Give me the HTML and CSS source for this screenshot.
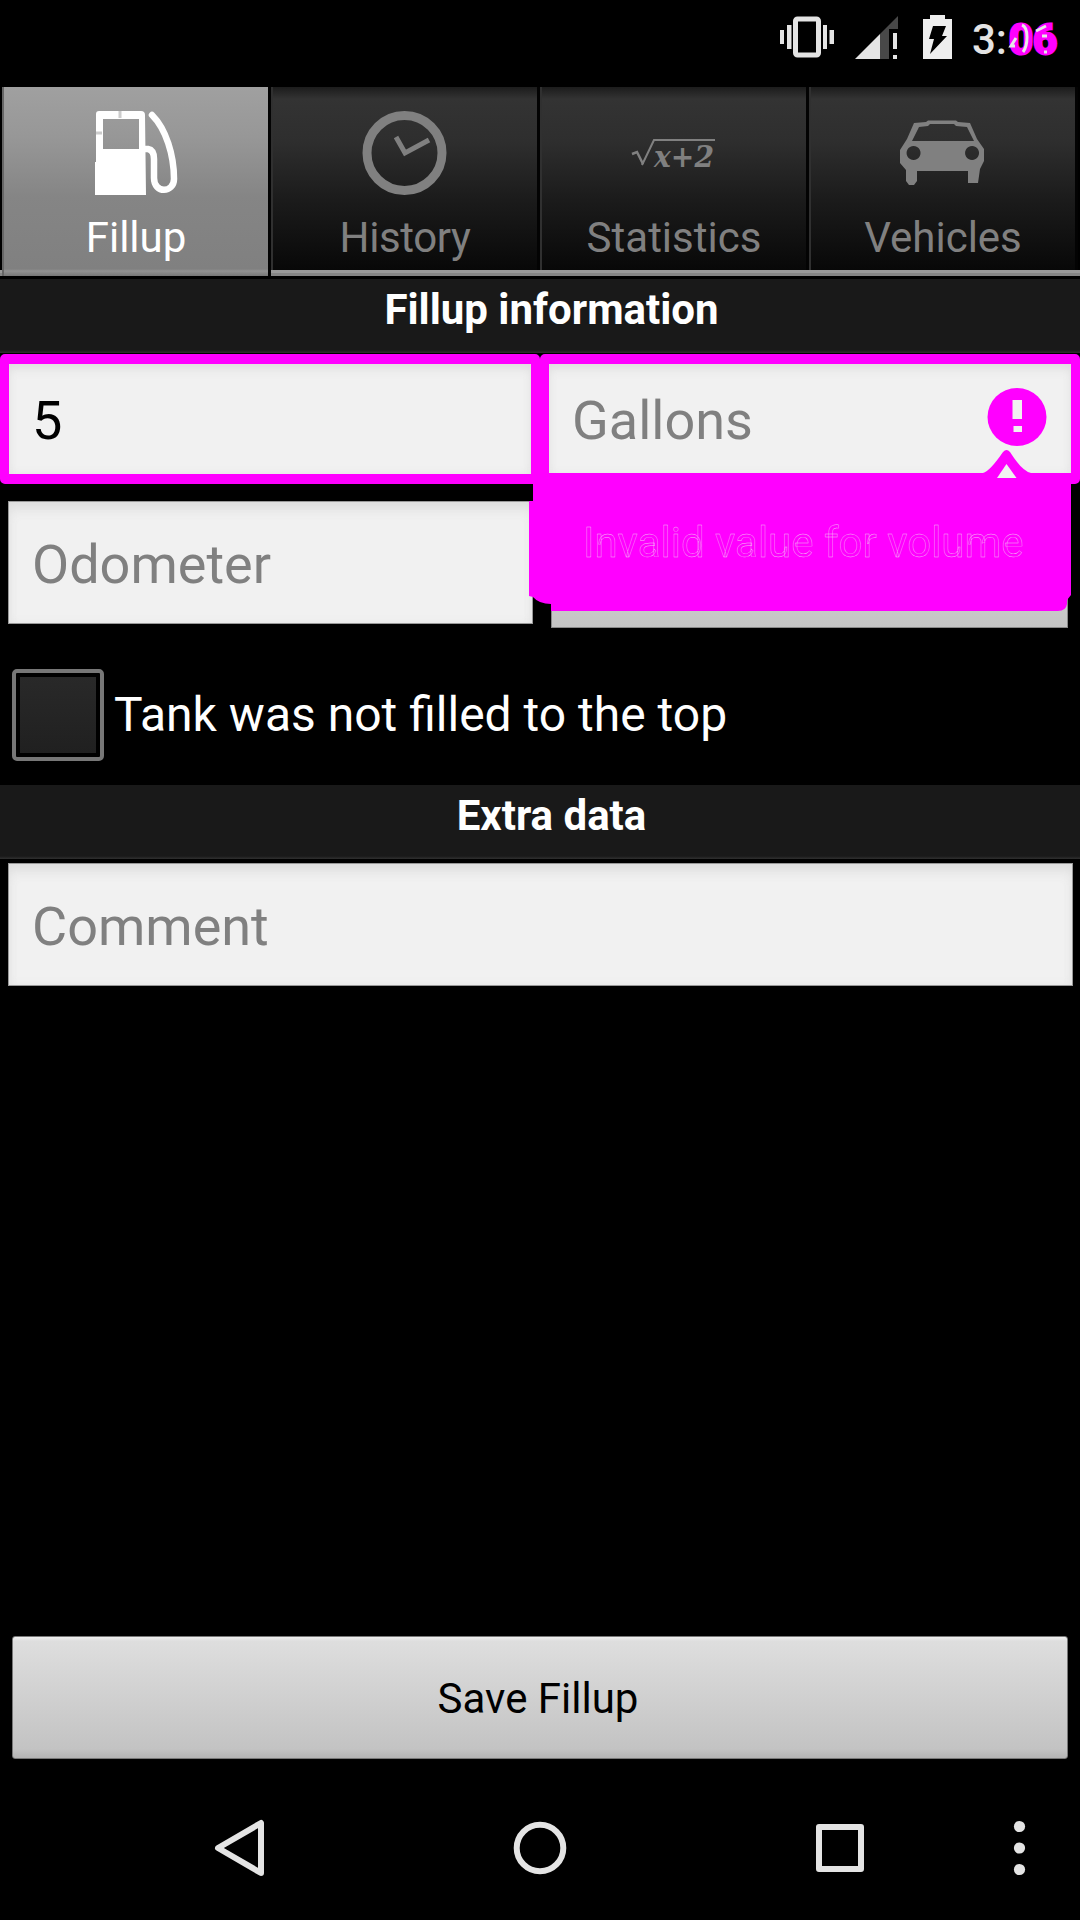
FILE: index.html
```html
<!DOCTYPE html>
<html lang="en">
<head>
<meta charset="utf-8">
<title>Fillup</title>
<link rel="stylesheet" href="styles.css">
</head>
<body>
<div class="screen">
  <header class="status">
    <svg class="status-icons" width="176" height="48" viewBox="780 14 176 48">
      <g fill="#e4e4e4">
        <path d="M780 30h4v14h-4zM787 25h4.500v24h-4.500zM823 25h4v24h-4zM829.500 30h4.500v14h-4.500z"/>
        <rect x="795.500" y="19" width="23" height="36" rx="2" fill="none" stroke="#e4e4e4" stroke-width="5"/>
        <path d="M898 16v13h-9v30h-9V34z" fill="#484848"/>
        <path d="M855 59l25-25v25zM893 33h4v16h-4zM893 55h4v4h-4z"/>
        <path d="M923 19h7v-4h15v4h7v40h-29z" fill="#eee"/>
      </g>
      <path d="M933 26h13l-4 10h5l-17 18 4-15h-5z" fill="#000"/>
    </svg>
    <div class="clock"><span>3:</span><span class="minutes">06</span>
      <svg class="clock-marks" width="48" height="34" viewBox="1008 22 48 34" fill="none" stroke="#e8e8e8" stroke-width="3">
        <path d="M1022 25q5 2 5 12t-4 15M1016 38l-5 8h4M1036 31l10-5M1042 36h5M1044 52h3"/>
      </svg>
    </div>
  </header>

  <nav class="tabs">
    <div class="tab active">
      <svg width="88" height="88" viewBox="0 0 88 88">
        <path d="M4 5q0-3 3-3h42q4 0 4 4l1 80H3V53h1zM11 10v30h36V10z" fill="#fff" fill-rule="evenodd"/>
        <path d="M53 40h3q6 1 6 10v19c0 16 20 15 20 1C82 46 74 20 60 6" fill="none" stroke="#fff" stroke-width="6.500" stroke-linecap="round"/>
        <path d="M28 2v7M4 24h6" stroke="#ccc" stroke-width="3"/>
      </svg>
      <span>Fillup</span>
    </div>
    <div class="tab">
      <svg width="88" height="88" viewBox="0 0 88 88" fill="none" stroke="#808080">
        <circle cx="43.500" cy="44" r="37.500" stroke-width="9"/>
        <path d="M35 28l9 16 24-13" stroke-width="5"/>
      </svg>
      <span class="history-label">History</span>
    </div>
    <div class="tab">
      <svg width="88" height="88" viewBox="1 0 88 88">
        <path d="M3 45l5-2 6 12" fill="none" stroke="#808080" stroke-width="2.500"/>
        <path d="M13 56L25 31H86" fill="none" stroke="#808080" stroke-width="2"/>
        <text class="formula" x="25" y="58" textLength="60" lengthAdjust="spacingAndGlyphs">x+2</text>
      </svg>
      <span>Statistics</span>
    </div>
    <div class="tab">
      <svg width="88" height="88" viewBox="1 0 88 88" fill="#808080" fill-rule="evenodd">
        <path d="M16 14l12-1 2-1.500h28l2 1.500 12 1 7 16 7 10v12l-4 8-2 14H70V62H19v10l-3 4h-5l-3-4V61l-6-7V41l7-11zM14 32h62l-7-14-11-1-2-2H32l-2 2-9 1zM15.500 37a7 7 0 1 0 .1 0zM74 37a7 7 0 1 0 .1 0z"/>
      </svg>
      <span>Vehicles</span>
    </div>
  </nav>

  <main class="form">
    <h2 class="section">Fillup information</h2>
    <div class="row marked-row">
      <div class="marked"><span class="value">5</span></div>
      <div class="marked">
        <span>Gallons</span>
        <svg class="error-icon" width="60" height="60" viewBox="0 0 60 60">
          <ellipse cx="30" cy="30" rx="29.500" ry="29" fill="#f0f"/>
          <path d="M25.500 13H35v19h-9.500zM26.500 39H35v6h-8.500z" fill="#f1f1f1"/>
        </svg>
      </div>
      <div class="error">
        <svg class="error-shape" width="544" height="162" viewBox="529 450 544 162">
          <path d="M533 473H983Q990 471 1003 452Q1006.500 448 1010 452Q1022 471 1031 473H1071V485V595L1067 600V604Q1066 611 1058 611H551V604Q539 604 533 597L529 596V501H533Z" fill="#f0f"/>
          <path d="M997 478l9.500-14 10 14z" fill="#f1f1f1"/>
        </svg>
        <span class="error-text">Invalid value for volume</span>
      </div>
    </div>
    <div class="row second-row">
      <div class="field"><span>Odometer</span></div>
      <div class="spinner"></div>
    </div>
    <div class="check-row">
      <span class="checkbox"></span>
      <span>Tank was not filled to the top</span>
    </div>
    <h2 class="section">Extra data</h2>
    <div class="field comment"><span>Comment</span></div>
  </main>

  <button class="save">Save Fillup</button>

  <footer class="navbar">
    <svg width="1080" height="140" viewBox="0 1780 1080 140" fill="none" stroke="#e4e4e4" stroke-width="6" stroke-linejoin="round">
      <path d="M261 1823v50l-43-25z"/>
      <circle cx="540" cy="1848" r="23.300"/>
      <rect x="819" y="1827" width="42" height="42"/>
      <g fill="#e4e4e4" stroke="none"><circle cx="1019.500" cy="1826.500" r="5.600"/><circle cx="1019.500" cy="1848" r="5.600"/><circle cx="1019.500" cy="1869.500" r="5.600"/></g>
    </svg>
  </footer>
</div>
</body>
</html>
```
FILE: styles.css
```css
* { box-sizing: border-box; }
body { margin: 0; background: #000; }
svg { display: block; flex: none; }
.screen {
  width: 1080px;
  height: 1920px;
  display: flex;
  flex-direction: column;
  overflow: hidden;
  background: #000;
  color: #fff;
  font: 42px/50px Roboto, sans-serif;
}

/* status bar */
.status {
  height: 87px;
  display: flex;
  align-items: flex-start;
  padding: 14px 0 0 780px;
}
.clock {
  position: relative;
  display: flex;
  margin: 1px 0 0 16px;
  color: #e4e4e4;
  font-weight: 500;
}
.minutes {
  margin-left: 2px;
  color: #f0f;
  font-weight: 700;
  -webkit-text-stroke: 3px #f0f;
}
.clock-marks { position: absolute; left: 36px; top: 7px; }

/* tabs */
.tabs {
  height: 192px;
  display: grid;
  grid-template-columns: repeat(4, 269px);
  padding-left: 2px;
  border-bottom: 3px solid #000;
  background: linear-gradient(#000 183px, #999 183px, #999 186px, #858585 186px);
}
.tab {
  height: 183px;
  padding-top: 22px;
  display: flex;
  flex-direction: column;
  align-items: center;
  gap: 16px;
  color: #808080;
  border-left: 2px solid #303030;
  border-right: 3px solid #030303;
  background: linear-gradient(#1c1c1c, #333 12px, #2e2e2e 55px, #1c1c1c 110px, #080808);
}
.tab.active {
  height: 189px;
  color: #fff;
  border-left-color: #666;
  background: linear-gradient(#a0a0a0, #979797 50px, #858585 110px, #808080 182px, #929292 184px, #777);
}
.history-label { letter-spacing: -.4px; }
.formula { font: italic bold 30px "DejaVu Serif", serif; fill: #808080; }

/* form */
.section {
  height: 75px;
  margin: 0;
  padding: 6px 0 0 23px;
  font-size: 42px;
  font-weight: 700;
  text-align: center;
  background: linear-gradient(#191919 71px, #303030 74px, #000 74px);
}
.row { display: grid; grid-template-columns: 540px 540px; }
.marked-row { position: relative; height: 130px; }
.marked, .field {
  display: flex;
  justify-content: space-between;
  color: #808080;
  font-size: 54px;
  line-height: 64px;
  background: #f1f1f1;
}
.marked {
  border: solid #f0f;
  border-width: 10px 9px;
  border-radius: 5px;
  padding: 25px 24px 0 23px;
  box-shadow: inset 0 8px 12px -4px #dedede, inset 0 0 8px #e4e4e4;
}
.value { color: #000; }
.error-icon { margin-top: -2px; }
.error { position: absolute; left: 529px; top: 96px; z-index: 1; }
.error-text {
  position: absolute;
  left: 54px;
  top: 68px;
  white-space: nowrap;
  color: #f0f;
  -webkit-text-stroke: .4px #f6b8f6;
}
.second-row { height: 185px; padding-top: 17px; }
.field {
  width: 525px;
  height: 123px;
  margin-left: 8px;
  padding: 31px 24px 0 23px;
  border: 1px solid #999;
  box-shadow: inset 0 10px 14px -4px #dcdcdc, inset 0 0 8px #e6e6e6;
}
.spinner {
  margin: 4px 12px 0 11px;
  height: 123px;
  border: 1px solid #888;
  background: linear-gradient(#e0e0e0, #c4c4c4);
}
.check-row {
  height: 116px;
  padding-left: 12px;
  display: flex;
  gap: 10px;
  font-size: 48px;
  line-height: 92px;
}
.checkbox {
  width: 92px;
  height: 92px;
  border: 4px solid #777;
  border-radius: 5px;
  background: linear-gradient(#292929, #202020) content-box;
  padding: 4px;
}
.comment { width: 1065px; margin-top: 3px; }

.save {
  width: 1056px;
  height: 123px;
  margin: auto 0 21px 12px;
  padding: 3px 4px 0 0;
  border: 1px solid #777;
  border-radius: 3px;
  color: #000;
  font: 42px/50px Roboto, sans-serif;
  background: linear-gradient(#f0f0f0, #dedede 4px, #c3c3c3 112px, #b4b4b4);
}
.navbar { height: 140px; }
```
